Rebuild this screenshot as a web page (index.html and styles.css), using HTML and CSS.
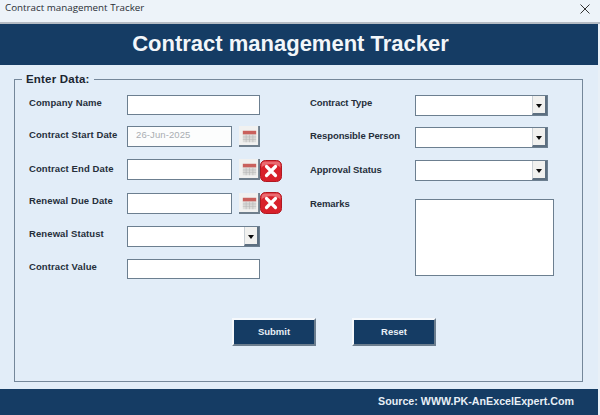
FILE: index.html
```html
<!DOCTYPE html>
<html lang="en">
<head>
<meta charset="utf-8">
<title>Contract management Tracker</title>
<link rel="stylesheet" href="styles.css">
</head>
<body>
<div class="window">
  <div class="titlebar">
    <span class="titlebar-text">Contract management Tracker</span>
    <svg class="close" width="12" height="12" viewBox="0 0 12 12"><path d="M1.5 1.5 10.5 10.5M10.5 1.5 1.5 10.5" stroke="#333" stroke-width="1" fill="none"/></svg>
  </div>
  <header class="banner">Contract management Tracker</header>
  <main class="content">
    <fieldset class="group">
      <legend class="group-title">Enter Data:</legend>
      <div class="columns">
        <div class="col col-left">
          <div class="row row-first"><label class="label">Company Name</label><div class="field field-short"></div></div>
          <div class="row row-tight"><label class="label label-mid">Contract Start Date</label><div class="field field-date placeholder">26-Jun-2025</div>
            <svg class="cal" width="22" height="22" viewBox="0 0 22 22"><use href="#calendar"/></svg></div>
          <div class="row row-base"><label class="label label-low">Contract End Date</label><div class="field field-date"></div>
            <svg class="cal" width="22" height="22" viewBox="0 0 22 22"><use href="#calendar"/></svg>
            <svg class="clear clear-down" width="22" height="22" viewBox="0 0 22 22"><use href="#clear"/></svg></div>
          <div class="row row-tight"><label class="label">Renewal Due Date</label><div class="field field-date"></div>
            <svg class="cal" width="22" height="22" viewBox="0 0 22 22"><use href="#calendar"/></svg>
            <svg class="clear clear-up" width="22" height="22" viewBox="0 0 22 22"><use href="#clear"/></svg></div>
          <div class="row row-base"><label class="label">Renewal Statust</label><div class="field field-wide combo"><span class="arrow"></span></div></div>
          <div class="row row-base"><label class="label">Contract Value</label><div class="field field-short"></div></div>
        </div>
        <div class="col col-right">
          <div class="row row-first"><label class="label label-r">Contract Type</label><div class="field field-wide combo"><span class="arrow"></span></div></div>
          <div class="row row-tight"><label class="label label-r label-mid">Responsible Person</label><div class="field field-wide combo"><span class="arrow"></span></div></div>
          <div class="row row-base"><label class="label label-r label-low">Approval Status</label><div class="field field-wide combo"><span class="arrow"></span></div></div>
          <div class="row row-remarks"><label class="label label-r label-top">Remarks</label><div class="field field-remarks"></div></div>
        </div>
      </div>
      <div class="actions">
        <button class="btn" type="button">Submit</button>
        <button class="btn" type="button">Reset</button>
      </div>
    </fieldset>
  </main>
  <footer class="footer">Source: WWW.PK-AnExcelExpert.Com</footer>
</div>
<svg class="defs" width="0" height="0">
  <defs>
    <g id="calendar">
      <rect x="0" y="0" width="21" height="21" fill="#f1f1f0"/>
      <path d="M21 0V21H0" fill="none" stroke="#6f7f8d" stroke-width="2"/>
      <rect x="4" y="5" width="14" height="4" fill="#c9605c"/>
      <rect x="4" y="9" width="14" height="8" fill="#dcdcda"/>
      <path d="M4 11.5H18M4 14H18M7.5 9V17M11 9V17M14.500 9V17" stroke="#b5b5b3" stroke-width=".6" fill="none"/>
    </g>
    <g id="clear">
      <rect x="0.500" y="0.500" width="21" height="21" rx="5" fill="#d8202a" stroke="#b01820"/>
      <path d="M1.500 8C4 3 18 3 20.500 8V5C20.500 2.500 19 1.500 17 1.500H5C3 1.500 1.500 2.500 1.500 5Z" fill="#ea6a70"/>
      <path d="M6.500 6.500 15.500 15.500M15.500 6.500 6.500 15.500" stroke="#fff" stroke-width="3.200" stroke-linecap="round" fill="none"/>
    </g>
  </defs>
</svg>
</body>
</html>
```

FILE: styles.css
```css
* { box-sizing: border-box; }
html, body { margin: 0; padding: 0; }
body {
  width: 600px;
  height: 415px;
  overflow: hidden;
  font-family: "Liberation Sans", Arial, sans-serif;
  background: #e9f0f7;
}
.window {
  width: 600px;
  height: 415px;
  display: flex;
  flex-direction: column;
}
.titlebar {
  height: 24px;
  flex: none;
  display: flex;
  align-items: center;
  justify-content: space-between;
  padding: 0 9px 7px 5px;
  background: #edf3f9;
  border-bottom: 2px solid #b5bcc4;
}
.titlebar-text {
  font-family: "Open Sans", "Liberation Sans", sans-serif;
  font-size: 9.800px;
  color: #2a2f36;
}
.close { display: block; margin-top: 3px; }
.banner {
  width: 598px;
  height: 41px;
  flex: none;
  background: #153c64;
  color: #f2f6fa;
  font-size: 22px;
  font-weight: bold;
  display: flex;
  align-items: center;
  justify-content: center;
  padding: 0 17px 1px 0;
}
.content {
  width: 598px;
  flex: 1;
  background: #e2edf8;
  padding: 7px 15px 8px 14px;
  min-height: 0;
}
.group {
  margin: 0;
  padding: 0;
  height: 310px;
  border: 1px solid #74879a;
  min-width: 0;
}
.group-title {
  margin-left: 7px;
  padding: 0 4px 0 4px;
  font-size: 11.500px;
  font-weight: bold;
  letter-spacing: .2px;
  color: #1b2530;
  line-height: 14px;
}
.columns {
  display: flex;
  height: 214px;
  padding: 7px 0 0 14px;
}
.col-left { width: 281px; }
.col-right { width: 270px; }
.row { display: flex; align-items: flex-start; }
.row-first { margin-top: 2px; }
.row-tight { margin-top: 11px; }
.row-base { margin-top: 12px; }
.row-remarks { margin-top: 18px; }
.label {
  width: 98px;
  flex: none;
  padding-top: 2px;
  font-size: 9.500px;
  font-weight: bold;
  letter-spacing: .1px;
  line-height: 12px;
  color: #262f3b;
}
.label-r { width: 105px; letter-spacing: -.08px; }
.label-mid { padding-top: 3px; }
.label-low { padding-top: 4px; }
.label-top { padding-top: 0; line-height: 10px; }
.field {
  background: #fff;
  border: 1px solid #6c7f90;
  flex: none;
}
.field-short { width: 133px; height: 20px; }
.field-wide { width: 133px; height: 21px; position: relative; }
.field-date { width: 105px; height: 21px; margin-right: 7px; }
.field-remarks { width: 139px; height: 77px; }
.placeholder {
  font-size: 9.500px;
  letter-spacing: .1px;
  color: #a9adb2;
  padding: 2px 0 0 8px;
  line-height: 12px;
  background: #fcfdfd;
}
.combo .arrow {
  position: absolute;
  right: 0;
  top: 0;
  bottom: 0;
  width: 15px;
  background: #f1f1ef;
  border-right: 2px solid #5d6f80;
  border-bottom: 2px solid #5d6f80;
  border-left: 1px solid #c9d0d6;
}
.combo .arrow::after {
  content: "";
  position: absolute;
  left: 3px;
  top: 8px;
  border-left: 3.500px solid transparent;
  border-right: 3.500px solid transparent;
  border-top: 4px solid #0b0b0b;
}
.cal, .clear { display: block; flex: none; }
.cal { width: 21px; height: 21px; }
.clear { width: 22px; height: 22px; }
.clear-down { margin-top: 1px; }
.clear-up { margin-top: -1px; }
.actions {
  display: flex;
  gap: 36px;
  padding: 18px 0 0 217px;
}
.btn {
  width: 84px;
  height: 28px;
  margin: 0;
  padding: 0 0 1px;
  background: #153c64;
  border: 2px solid;
  border-color: #f6f9fc #6b7d8e #6b7d8e #f6f9fc;
  color: #e8eff6;
  font-family: "Liberation Sans", Arial, sans-serif;
  font-size: 9.500px;
  font-weight: bold;
}
.footer {
  width: 598px;
  height: 26px;
  flex: none;
  background: #153c64;
  color: #e8eff6;
  font-size: 10.700px;
  font-weight: bold;
  display: flex;
  align-items: center;
  justify-content: flex-end;
  padding: 0 24px 2px 0;
}
.defs { position: absolute; }
```
